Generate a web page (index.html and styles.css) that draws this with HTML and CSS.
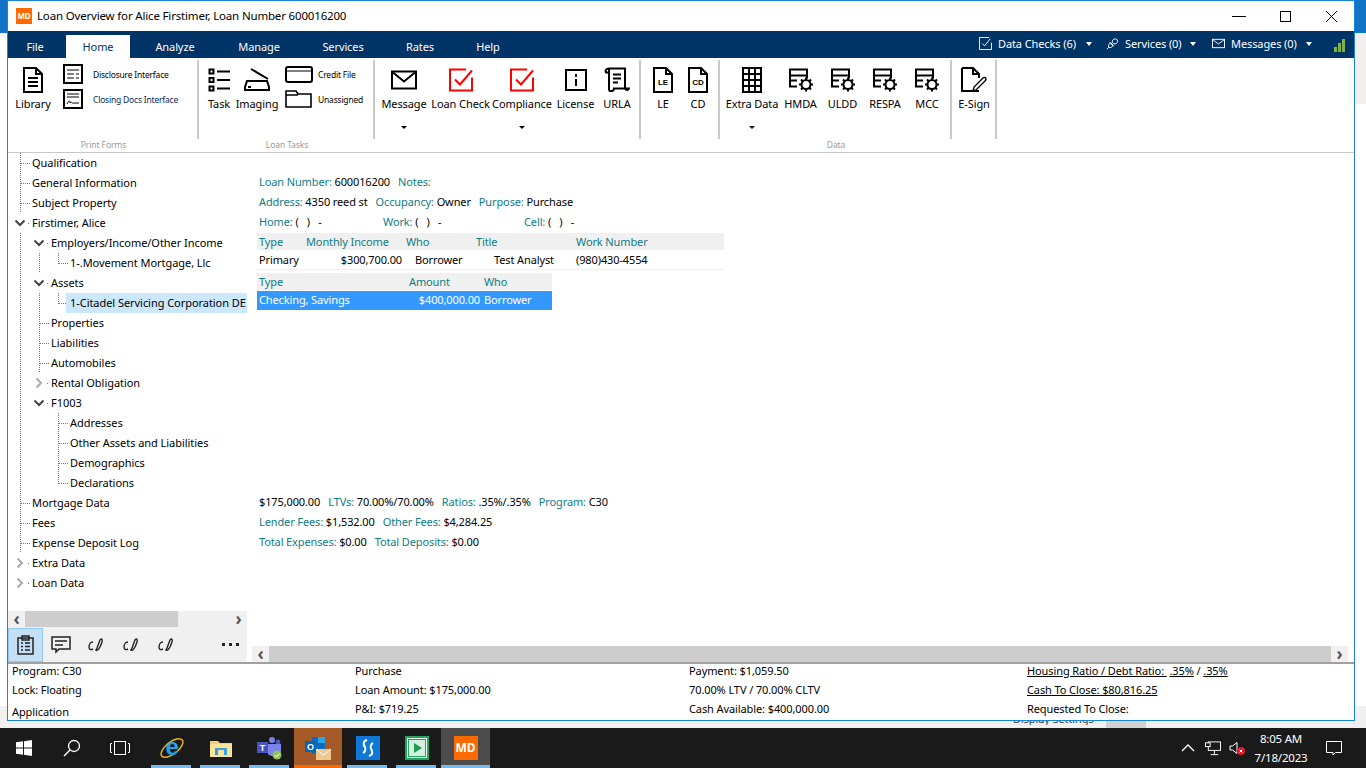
FILE: index.html
```html
<!DOCTYPE html>
<html lang="en">

<head>
    <meta charset="UTF-8">
    <meta name="viewport" content="width=device-width, initial-scale=1.0">
    <link rel="stylesheet" href="styles.css">
    <title>Loan Overview</title>
</head>

<body>
    <svg class="defs" aria-hidden="true">
        <symbol id="gearTable" viewBox="0 0 26 25">
            <path d="M2 13V2H19V11M2 8H19M2 13V19H9M2 13H9" fill="none" stroke="#000" stroke-width="2" />
            <circle cx="18" cy="17" r="4.500" fill="none" stroke="#000" stroke-width="2" />
            <path d="M18 10V12.500M18 21.500V24M11 17H13.500M22.500 17H25M13 12L15 14M21 20L23 22M23 12L21 14M15 20L13 22" stroke="#000" stroke-width="2" />
        </symbol>
        <symbol id="redCheck" viewBox="0 0 26 25">
            <path d="M18 2H2V23H24V10" fill="none" stroke="#f00" stroke-width="2" />
            <path d="M7 12L12 17L24 3" fill="none" stroke="#f00" stroke-width="2" />
        </symbol>
        <symbol id="signPen" viewBox="0 0 16 16">
            <path d="M5 5C2 5 1 8 1 10C1 13 3 13 5 12M8 13C10 14 12 11 14 5C15 2 13 1 12 3L9 11Z" fill="none" stroke="#222" stroke-width="1.400" />
        </symbol>
        <symbol id="chevOpen" viewBox="0 0 12 8">
            <path d="M1.500 1.500L6 6L10.500 1.500" fill="none" stroke="#444" stroke-width="2" />
        </symbol>
        <symbol id="chevClosed" viewBox="0 0 8 12">
            <path d="M1.500 1.500L6 6L1.500 10.500" fill="none" stroke="#aaa" stroke-width="2" />
        </symbol>
    </svg>

    <div class="desktop">
        <div class="deskHead"></div>
        <div class="deskSide"></div>
        <div class="deskStrip"></div>
        <div class="deskPeekBox"></div>
        <div class="deskPeek"><span>Display Settings</span></div>

        <div class="window">
            <!-- Barra de titulo -->
            <div class="titleBar">
                <span class="appLogo">MD</span>
                <span class="titleText">Loan Overview for Alice Firstimer, Loan Number 600016200</span>
                <div class="winBtns">
                    <svg class="winBtn" viewBox="0 0 46 30"><path d="M16 15.500H30" stroke="#000" /></svg>
                    <svg class="winBtn" viewBox="0 0 46 30"><rect x="18.500" y="10.500" width="10" height="10" fill="none" stroke="#000" /></svg>
                    <svg class="winBtn" viewBox="0 0 46 30"><path d="M18 10L29 21M29 10L18 21" stroke="#000" /></svg>
                </div>
            </div>

            <!-- Pestañas -->
            <div class="navBar">
                <span class="tab tabFile">File</span>
                <span class="tab tabHome">Home</span>
                <span class="tab tabAnalyze">Analyze</span>
                <span class="tab tabManage">Manage</span>
                <span class="tab tabServices">Services</span>
                <span class="tab tabRates">Rates</span>
                <span class="tab tabHelp">Help</span>
                <div class="navRight">
                    <div class="navItem navChecks">
                        <svg class="navIcon" viewBox="0 0 14 14"><path d="M11 .500H.500V13.500H13.500V6" fill="none" stroke="#fff" /><path d="M3.500 7L6 9.500L12 2" fill="none" stroke="#fff" /></svg>
                        <span class="navLabel">Data Checks (6)</span><span class="caret"></span>
                    </div>
                    <div class="navItem navServices">
                        <svg class="navIcon" viewBox="0 0 14 14"><path d="M1 13L3 11M4 6L8 10M3 11C2 9 3 8 5 6L8 9C6 11 5 12 3 11ZM7 6C6 4 8 2 10 2C12 2 13 4 12 6C11 8 9 8 7 6Z" fill="none" stroke="#fff" /></svg>
                        <span class="navLabel">Services (0)</span><span class="caret"></span>
                    </div>
                    <div class="navItem navMessages">
                        <svg class="navIcon" viewBox="0 0 14 10"><rect x=".500" y=".500" width="13" height="9" fill="none" stroke="#fff" /><path d="M1 1L7 5.500L13 1" fill="none" stroke="#fff" /></svg>
                        <span class="navLabel">Messages (0)</span><span class="caret"></span>
                    </div>
                    <div class="signal"><i class="barA"></i><i class="barB"></i><i class="barC"></i></div>
                </div>
            </div>

            <!-- Ribbon -->
            <div class="ribbon">
                <div class="group groupPrint">
                    <div class="groupItems">
                        <div class="rbtn w38">
                            <svg class="ico" width="20" height="26" viewBox="0 0 20 26"><path d="M1 1H13L19 7V25H1ZM13 1V7H19M5 11H15M5 15H15M5 19H15" fill="none" stroke="#000" stroke-width="2" /></svg>
                            <span>Library</span>
                        </div>
                        <div class="smallCol smallDocs">
                            <div class="smallRow">
                                <svg width="20" height="20" viewBox="0 0 20 20"><rect x="1" y="1" width="18" height="18" fill="none" stroke="#000" stroke-width="2" /><path d="M4 6H16M4 10H11M13 10H16M4 14H11M13 14H16" stroke="#000" /></svg>
                                <span>Disclosure Interface</span>
                            </div>
                            <div class="smallRow">
                                <svg width="20" height="20" viewBox="0 0 20 20"><rect x="1" y="1" width="18" height="18" fill="none" stroke="#000" stroke-width="2" /><path d="M4 5H16M4 8H16M4 15C6 11 7 11 7 14C9 12 9 15 11 14H16" fill="none" stroke="#000" /></svg>
                                <span class="linkish">Closing Docs Interface</span>
                            </div>
                        </div>
                    </div>
                    <span class="groupName">Print Forms</span>
                </div>

                <div class="group groupTasks">
                    <div class="groupItems">
                        <div class="rbtn w38">
                            <svg class="ico" width="23" height="24" viewBox="0 0 23 24"><path d="M1.500 1.500H5.500V5.500H1.500ZM1.500 10H5.500V14H1.500ZM1.500 18.500H5.500V22.500H1.500ZM9 3.500H22M9 12H22M9 20.500H22" fill="none" stroke="#000" stroke-width="2" /></svg>
                            <span>Task</span>
                        </div>
                        <div class="rbtn w38">
                            <svg class="ico" width="26" height="24" viewBox="0 0 26 24"><path d="M7 1L24 11M3 13H23L25 19V22H1V19ZM4 19H7" fill="none" stroke="#000" stroke-width="2" /></svg>
                            <span>Imaging</span>
                        </div>
                        <div class="smallCol smallFiles">
                            <div class="smallRow">
                                <svg width="28" height="17" viewBox="0 0 28 17"><rect x="1" y="1" width="26" height="15" rx="2" fill="none" stroke="#000" stroke-width="2" /><path d="M1 5H27" stroke="#000" /></svg>
                                <span>Credit File</span>
                            </div>
                            <div class="smallRow">
                                <svg width="28" height="18" viewBox="0 0 28 18"><path d="M1 1H11L13 4H26V17H1ZM1 5H13" fill="none" stroke="#000" stroke-width="1.600" /></svg>
                                <span>Unassigned</span>
                            </div>
                        </div>
                    </div>
                    <span class="groupName">Loan Tasks</span>
                </div>

                <div class="group groupChecks">
                    <div class="groupItems">
                        <div class="rbtn w56">
                            <svg class="ico" width="26" height="19" viewBox="0 0 26 19"><rect x="1" y="1" width="24" height="17" fill="none" stroke="#000" stroke-width="2" /><path d="M2 2L13 11L24 2" fill="none" stroke="#000" stroke-width="2" /></svg>
                            <span>Message</span><b class="dropMark"></b>
                        </div>
                        <div class="rbtn w57">
                            <svg class="ico" width="26" height="25"><use href="#redCheck" /></svg>
                            <span>Loan Check</span>
                        </div>
                        <div class="rbtn w66">
                            <svg class="ico" width="26" height="25"><use href="#redCheck" /></svg>
                            <span>Compliance</span><b class="dropMark"></b>
                        </div>
                        <div class="rbtn w41">
                            <svg class="ico" width="22" height="22" viewBox="0 0 22 22"><rect x="1" y="1" width="20" height="20" fill="none" stroke="#000" stroke-width="2" /><path d="M11 5V8M11 10V17" stroke="#000" stroke-width="2" /></svg>
                            <span>License</span>
                        </div>
                        <div class="rbtn w42">
                            <svg class="ico" width="26" height="25" viewBox="0 0 26 25"><path d="M5 1H21V20C21 23 24 23 25 21H10C10 24 7 24 5 23M5 1C2 1 1 3 2 5H5M5 1V23M9 7H17M9 11H17M9 15H14" fill="none" stroke="#000" stroke-width="2" /></svg>
                            <span>URLA</span>
                        </div>
                    </div>
                </div>

                <div class="group groupForms">
                    <div class="groupItems">
                        <div class="rbtn w34">
                            <svg class="ico" width="20" height="26" viewBox="0 0 20 26"><path d="M1 1H13L19 7V25H1ZM13 1V7H19" fill="none" stroke="#000" stroke-width="2" /><text x="10" y="18" class="docText">LE</text></svg>
                            <span>LE</span>
                        </div>
                        <div class="rbtn w36">
                            <svg class="ico" width="20" height="26" viewBox="0 0 20 26"><path d="M1 1H13L19 7V25H1ZM13 1V7H19" fill="none" stroke="#000" stroke-width="2" /><text x="10" y="18" class="docText">CD</text></svg>
                            <span>CD</span>
                        </div>
                    </div>
                </div>

                <div class="group groupData">
                    <div class="groupItems">
                        <div class="rbtn w56">
                            <svg class="ico" width="20" height="26" viewBox="0 0 20 26"><rect width="20" height="26" fill="#000" /><path d="M2 2H6V6H2ZM8 2H12V6H8ZM14 2H18V6H14ZM2 8H6V12H2ZM8 8H12V12H8ZM14 8H18V12H14ZM2 14H6V18H2ZM8 14H12V18H8ZM14 14H18V18H14ZM2 20H6V24H2ZM8 20H12V24H8ZM14 20H18V24H14Z" fill="#fff" /></svg>
                            <span>Extra Data</span><b class="dropMark"></b>
                        </div>
                        <div class="rbtn w41">
                            <svg class="ico" width="26" height="25"><use href="#gearTable" /></svg>
                            <span>HMDA</span>
                        </div>
                        <div class="rbtn w43">
                            <svg class="ico" width="26" height="25"><use href="#gearTable" /></svg>
                            <span>ULDD</span>
                        </div>
                        <div class="rbtn w42">
                            <svg class="ico" width="26" height="25"><use href="#gearTable" /></svg>
                            <span>RESPA</span>
                        </div>
                        <div class="rbtn w42">
                            <svg class="ico" width="26" height="25"><use href="#gearTable" /></svg>
                            <span>MCC</span>
                        </div>
                    </div>
                    <span class="groupName">Data</span>
                </div>

                <div class="group groupSign">
                    <div class="groupItems">
                        <div class="rbtn w42">
                            <svg class="ico" width="26" height="26" viewBox="0 0 26 26"><path d="M1 1H12L18 7V11M12 1V7H18M18 24H1V1" fill="none" stroke="#000" stroke-width="2" /><path d="M12 24L13 20L22 11C24 9 26 12 24 14L15 23Z" fill="none" stroke="#000" stroke-width="1.400" /></svg>
                            <span>E-Sign</span>
                        </div>
                    </div>
                </div>
            </div>

            <div class="mainArea">
                <!-- Arbol de navegacion -->
                <div class="leftPane">
                    <div class="tree">
                        <div class="node"><i class="cell tee"></i>Qualification</div>
                        <div class="node"><i class="cell tee"></i>General Information</div>
                        <div class="node"><i class="cell tee"></i>Subject Property</div>
                        <div class="node"><i class="cell exp"><svg width="12" height="8"><use href="#chevOpen" /></svg></i>Firstimer, Alice</div>
                        <div class="node"><i class="cell line"></i><i class="cell exp"><svg width="12" height="8"><use href="#chevOpen" /></svg></i>Employers/Income/Other Income</div>
                        <div class="node"><i class="cell line"></i><i class="cell line"></i><i class="cell ell"></i>1-.Movement Mortgage, Llc</div>
                        <div class="node"><i class="cell line"></i><i class="cell exp"><svg width="12" height="8"><use href="#chevOpen" /></svg></i>Assets</div>
                        <div class="node"><i class="cell line"></i><i class="cell line"></i><i class="cell ell"></i><span class="selected">1-Citadel Servicing Corporation DE</span></div>
                        <div class="node"><i class="cell line"></i><i class="cell tee"></i>Properties</div>
                        <div class="node"><i class="cell line"></i><i class="cell tee"></i>Liabilities</div>
                        <div class="node"><i class="cell line"></i><i class="cell tee"></i>Automobiles</div>
                        <div class="node"><i class="cell line"></i><i class="cell exp"><svg width="8" height="12"><use href="#chevClosed" /></svg></i>Rental Obligation</div>
                        <div class="node"><i class="cell line"></i><i class="cell exp"><svg width="12" height="8"><use href="#chevOpen" /></svg></i>F1003</div>
                        <div class="node"><i class="cell line"></i><i class="cell"></i><i class="cell tee"></i>Addresses</div>
                        <div class="node"><i class="cell line"></i><i class="cell"></i><i class="cell tee"></i>Other Assets and Liabilities</div>
                        <div class="node"><i class="cell line"></i><i class="cell"></i><i class="cell tee"></i>Demographics</div>
                        <div class="node"><i class="cell line"></i><i class="cell"></i><i class="cell ell"></i>Declarations</div>
                        <div class="node"><i class="cell tee"></i>Mortgage Data</div>
                        <div class="node"><i class="cell tee"></i>Fees</div>
                        <div class="node"><i class="cell tee"></i>Expense Deposit Log</div>
                        <div class="node"><i class="cell exp"><svg width="8" height="12"><use href="#chevClosed" /></svg></i>Extra Data</div>
                        <div class="node"><i class="cell exp"><svg width="8" height="12"><use href="#chevClosed" /></svg></i>Loan Data</div>
                    </div>
                    <div class="hScroll treeScroll">
                        <span class="scrollArrow">&#8249;</span>
                        <div class="track"><div class="thumb thumbTree"></div></div>
                        <span class="scrollArrow">&#8250;</span>
                    </div>
                    <div class="paneTools">
                        <div class="toolBtn toolActive">
                            <svg width="17" height="20" viewBox="0 0 17 20"><path d="M1 3H16V19H1ZM5 1H12V5H5ZM4 8H6M8 8H13M4 11.500H6M8 11.500H13M4 15H6M8 15H13" fill="none" stroke="#222" stroke-width="1.500" /></svg>
                        </div>
                        <div class="toolBtn">
                            <svg width="20" height="18" viewBox="0 0 20 18"><path d="M1 1H19V13H8L5 16V13H1ZM4 5H16M4 9H12" fill="none" stroke="#222" stroke-width="1.500" /></svg>
                        </div>
                        <div class="toolBtn"><svg width="16" height="16"><use href="#signPen" /></svg></div>
                        <div class="toolBtn"><svg width="16" height="16"><use href="#signPen" /></svg></div>
                        <div class="toolBtn"><svg width="16" height="16"><use href="#signPen" /></svg></div>
                        <div class="toolMore"><i></i><i></i><i></i></div>
                    </div>
                </div>

                <!-- Datos del prestamo -->
                <div class="rightPane">
                    <div class="details">
                        <div class="infoRow"><label>Loan Number:</label> 600016200<label class="next">Notes:</label></div>
                        <div class="infoRow"><label>Address:</label> 4350 reed st<label class="next">Occupancy:</label> Owner<label class="next">Purpose:</label> Purchase</div>
                        <div class="infoRow phones">
                            <div class="phoneHome"><label>Home:</label> (&nbsp;&nbsp;&nbsp;)&nbsp;&nbsp;&nbsp;-</div>
                            <div class="phoneWork"><label>Work:</label> (&nbsp;&nbsp;&nbsp;)&nbsp;&nbsp;&nbsp;-</div>
                            <div><label>Cell:</label> (&nbsp;&nbsp;&nbsp;)&nbsp;&nbsp;&nbsp;-</div>
                        </div>

                        <div class="gridHead headJobs"><span>Type</span><span>Monthly Income</span><span>Who</span><span>Title</span><span>Work Number</span></div>
                        <div class="gridRow rowJobs"><span>Primary</span><span class="amount">$300,700.00</span><span>Borrower</span><span>Test Analyst</span><span>(980)430-4554</span></div>

                        <div class="gridHead headAssets"><span>Type</span><span>Amount</span><span>Who</span></div>
                        <div class="gridRow rowAssets"><span>Checking, Savings</span><span class="amount">$400,000.00</span><span>Borrower</span></div>

                        <div class="summary">
                            <div class="infoRow">$175,000.00<label class="next">LTVs:</label> 70.00%/70.00%<label class="next">Ratios:</label> .35%/.35%<label class="next">Program:</label> C30</div>
                            <div class="infoRow"><label>Lender Fees:</label> $1,532.00<label class="next">Other Fees:</label> $4,284.25</div>
                            <div class="infoRow"><label>Total Expenses:</label> $0.00<label class="next">Total Deposits:</label> $0.00</div>
                        </div>
                    </div>
                    <div class="hScroll mainScroll">
                        <span class="scrollArrow">&#8249;</span>
                        <div class="track"><div class="thumb thumbMain"></div></div>
                        <span class="scrollArrow">&#8250;</span>
                    </div>
                </div>
            </div>

            <!-- Resumen inferior -->
            <div class="statusBar">
                <div class="statusCol colA">
                    <div>Program: C30</div>
                    <div>Lock: Floating</div>
                    <div class="lowered">Application</div>
                </div>
                <div class="statusCol colB">
                    <div>Purchase</div>
                    <div>Loan Amount: $175,000.00</div>
                    <div>P&amp;I: $719.25</div>
                </div>
                <div class="statusCol colC">
                    <div>Payment: $1,059.50</div>
                    <div>70.00% LTV / 70.00% CLTV</div>
                    <div>Cash Available: $400,000.00</div>
                </div>
                <div class="statusCol">
                    <div><u>Housing Ratio / Debt Ratio:&nbsp;</u> <u>.35%</u> / <u>.35%</u></div>
                    <div><u>Cash To Close: $80,816.25</u></div>
                    <div>Requested To Close:</div>
                </div>
            </div>
        </div>
    </div>

    <!-- Barra de tareas -->
    <div class="taskbar">
        <div class="sysBtn">
            <svg width="16" height="16" viewBox="0 0 16 16"><path d="M0 2.300L7 1.300V7.500H0ZM8 1.200L16 0V7.500H8ZM0 8.500H7V14.700L0 13.700ZM8 8.500H16V16L8 14.800Z" fill="#fff" /></svg>
        </div>
        <div class="sysBtn">
            <svg width="18" height="18" viewBox="0 0 18 18"><circle cx="11" cy="7" r="5.500" fill="none" stroke="#fff" stroke-width="1.300" /><path d="M7 11L1 17" stroke="#fff" stroke-width="1.500" /></svg>
        </div>
        <div class="sysBtn">
            <svg width="20" height="14" viewBox="0 0 20 14"><rect x="4.500" y=".500" width="11" height="13" fill="none" stroke="#fff" /><path d="M2 2.500H.500V11.500H2M18 2.500H19.500V11.500H18" fill="none" stroke="#fff" /></svg>
        </div>
        <div class="appBtn running">
            <svg class="ieIcon" width="24" height="24" viewBox="0 0 24 24"><ellipse cx="12" cy="12" rx="13" ry="6" transform="rotate(-38 12 12)" fill="none" stroke="#e8b01f" stroke-width="1.500" /><text x="12" y="19" class="ieText">e</text></svg>
        </div>
        <div class="appBtn running">
            <svg width="22" height="18" viewBox="0 0 22 18"><path d="M0 2H8L10 4H22V18H0Z" fill="#f2cf73" /><path d="M0 5H22V18H0Z" fill="#fbe29a" /><path d="M8 16V11H14V16H17V9H5V16Z" fill="#3aa0dc" /></svg>
        </div>
        <div class="appBtn running">
            <svg width="25" height="24" viewBox="0 0 25 24"><circle cx="15" cy="4" r="3" fill="#7b83eb" /><circle cx="21" cy="6" r="2.400" fill="#5059c9" /><path d="M9 8H24V16C24 21 12 21 11 18Z" fill="#7b83eb" /><rect y="6" width="11" height="11" fill="#4b53bc" /><text x="5.500" y="15" class="teamsText">T</text><circle cx="20" cy="19" r="4.500" fill="#92c353" /><path d="M17.500 19L19.500 21L22.500 17.500" fill="none" stroke="#fff" /></svg>
        </div>
        <div class="appBtn outlook">
            <svg width="26" height="24" viewBox="0 0 26 24"><rect x="7" y="1" width="13" height="17" fill="#0f6cbd" /><rect x="13" y="1" width="7" height="6" fill="#28a8ea" /><rect y="5" width="11" height="11" fill="#0a64b4" /><text x="5.500" y="14" class="teamsText">O</text><rect x="11" y="13" width="15" height="11" fill="#efc78f" /><path d="M11 13L18.500 19L26 13" fill="none" stroke="#fff" /></svg>
        </div>
        <div class="appBtn running">
            <svg width="24" height="24" viewBox="0 0 24 24"><rect width="24" height="24" fill="#0d78d8" /><path d="M11 4C7 5 7 9 9 11C10 13 9 16 7 17M13 20C17 19 17 15 15 13C14 11 15 8 17 7" fill="none" stroke="#fff" stroke-width="2" /></svg>
        </div>
        <div class="appBtn running">
            <svg width="24" height="24" viewBox="0 0 24 24"><rect x="1" y="1" width="22" height="22" fill="#fff" stroke="#1fa85c" stroke-width="2" /><rect x="3.500" y="3.500" width="17" height="17" fill="#d4f0df" stroke="#1fa85c" /><path d="M9 7L17 12L9 17Z" fill="#1d9a55" /></svg>
        </div>
        <div class="appBtn mdBtn"><span class="mdLogo">MD</span></div>

        <div class="tray">
            <svg class="trayChev" width="14" height="8" viewBox="0 0 14 8"><path d="M1 7L7 1L13 7" fill="none" stroke="#fff" stroke-width="1.300" /></svg>
            <svg class="trayNet" width="16" height="15" viewBox="0 0 17 15"><rect x="3.500" y=".500" width="13" height="9" fill="#1a1a1a" stroke="#fff" /><path d="M10 10V14M6 14H14" stroke="#fff" /><rect x=".500" y="1.500" width="5" height="4" fill="#1a1a1a" stroke="#fff" /></svg>
            <svg class="traySound" width="17" height="15" viewBox="0 0 17 15"><path d="M1 5H3.500L8 1.500V12.500L3.500 9H1Z" fill="none" stroke="#fff" /><circle cx="12" cy="10" r="4" fill="#e81123" /><path d="M10.500 8.500L13.500 11.500M13.500 8.500L10.500 11.500" stroke="#fff" /></svg>
            <div class="clock"><span>8:05 AM</span><span>7/18/2023</span></div>
            <svg class="trayNote" width="16" height="15" viewBox="0 0 16 15"><path d="M.500 .500H15.500V11.500H9.500L7 14V11.500H.500Z" fill="none" stroke="#fff" /></svg>
        </div>
    </div>
</body>

</html>
```

FILE: styles.css
```css
* {
    box-sizing: border-box;
}

body {
    margin: 0;
    width: 1366px;
    height: 768px;
    overflow: hidden;
    background-color: #fff;
    font-family: "Noto Sans", "Open Sans", sans-serif;
    font-size: 11px;
    letter-spacing: -0.1px;
    color: #000;
}

.defs {
    position: absolute;
    width: 0;
    height: 0;
}

/* Escritorio detras de la ventana */
.desktop {
    position: relative;
    height: 728px;
    background: #fff;
}

.deskHead {
    height: 33px;
    background: #1173c5;
}

.deskSide {
    position: absolute;
    top: 33px;
    right: 0;
    width: 11px;
    height: 71px;
    background: #f0efee;
}

.deskStrip {
    position: absolute;
    left: 0;
    right: 0;
    bottom: 0;
    height: 22px;
    background: #f0f0f0;
}

.deskPeekBox {
    position: absolute;
    left: 1106px;
    bottom: 0;
    width: 40px;
    height: 8px;
    background: #d2d2d2;
}

.deskPeek {
    position: absolute;
    left: 1013px;
    top: 721px;
    height: 4px;
    overflow: hidden;
    color: #444;
}

.deskPeek span {
    display: block;
    margin-top: -4px;
    line-height: 4px;
}

.window {
    position: absolute;
    left: 7px;
    top: 0;
    width: 1348px;
    height: 721px;
    display: flex;
    flex-direction: column;
    background: #fff;
    border: 1px solid #1883d7;
}

/* Titulo */
.titleBar {
    height: 30px;
    flex: none;
    display: flex;
    align-items: center;
    padding-left: 8px;
}

.appLogo {
    width: 16px;
    height: 16px;
    margin-right: 5px;
    background: #ff6a00;
    color: #fff;
    font-size: 8px;
    font-weight: 700;
    line-height: 16px;
    text-align: center;
}

.titleText {
    font-size: 11.5px;
    letter-spacing: -0.17px;
    line-height: 28px;
}

.winBtns {
    margin-left: auto;
    display: flex;
}

.winBtn {
    width: 46px;
    height: 30px;
}

/* Pestañas */
.navBar {
    height: 27px;
    flex: none;
    display: flex;
    align-items: flex-end;
    background: #003366;
    color: #fff;
}

.tab {
    height: 23px;
    line-height: 24px;
    text-align: center;
}

.tabFile { width: 54px; margin-right: 4px; line-height: 23px; }
.tabHome { width: 64px; background: #fff; color: #003366; }
.tabAnalyze { width: 90px; }
.tabManage { width: 78px; }
.tabServices { width: 90px; }
.tabRates { width: 64px; }
.tabHelp { width: 72px; }

.navRight {
    margin-left: auto;
    align-self: flex-start;
    height: 25px;
    display: flex;
    align-items: center;
}

.navItem {
    display: flex;
    align-items: center;
}

.navChecks { width: 127px; padding-right: 14px; }
.navServices { width: 106px; padding-right: 16px; }
.navMessages { width: 122px; padding-right: 22px; }

.navIcon {
    width: 13px;
    height: 13px;
    margin-right: 6px;
    flex: none;
}

.navLabel {
    flex: 1;
    white-space: nowrap;
}

.caret {
    width: 0;
    height: 0;
    border-left: 3.5px solid transparent;
    border-right: 3.5px solid transparent;
    border-top: 4px solid #fff;
}

.signal {
    width: 20px;
    height: 14px;
    display: flex;
    align-items: flex-end;
    gap: 1px;
    margin-top: 2px;
}

.signal i {
    width: 3px;
    background: #7cb342;
}

.barA { height: 5px; }
.barB { height: 9px; }
.barC { height: 13px; }

/* Ribbon */
.ribbon {
    height: 95px;
    flex: none;
    display: flex;
    border-bottom: 1px solid #c8c8c8;
}

.group {
    display: flex;
    flex-direction: column;
    align-items: stretch;
    padding-top: 2px;
}

.groupItems {
    height: 79px;
    display: flex;
    border-right: 2px solid #c8c8c8;
}

.groupName {
    font-size: 8.5px;
    line-height: 12px;
    text-align: center;
    color: #999;
}

.groupPrint { width: 191px; }
.groupPrint .groupItems { padding-left: 6px; }
.groupTasks { width: 176px; }
.groupTasks .groupItems { padding-left: 1px; }
.groupChecks { width: 266px; }
.groupChecks .groupItems { padding-left: 1px; }
.groupForms { width: 79px; }
.groupForms .groupItems { padding-left: 5px; }
.groupData { width: 232px; }
.groupData .groupItems { padding-left: 4px; }
.groupSign { width: 45px; }
.groupSign .groupItems { padding-left: 1px; }

.rbtn {
    position: relative;
    height: 79px;
    flex: none;
    display: flex;
    flex-direction: column;
    align-items: center;
    white-space: nowrap;
}

.ico {
    height: 26px;
    margin-top: 7px;
    margin-bottom: 3px;
    flex: none;
}

.rbtn span {
    line-height: 16px;
}

.w34 { width: 34px; }
.w36 { width: 36px; }
.w38 { width: 38px; }
.w41 { width: 41px; }
.w42 { width: 42px; }
.w43 { width: 43px; }
.w56 { width: 56px; }
.w57 { width: 57px; }
.w66 { width: 66px; }

.dropMark {
    margin-top: 14px;
    width: 0;
    height: 0;
    border-left: 3px solid transparent;
    border-right: 3px solid transparent;
    border-top: 3px solid #000;
}

.docText {
    font-family: "Liberation Sans", sans-serif;
    font-size: 8px;
    font-weight: 700;
    text-anchor: middle;
}

.smallCol {
    display: flex;
    flex-direction: column;
    gap: 5px;
    padding-top: 4px;
    font-size: 8.5px;
    letter-spacing: -0.2px;
}

.smallDocs { margin-left: 11px; }
.smallFiles { margin-left: 9px; }

.smallRow {
    height: 20px;
    display: flex;
    align-items: center;
    white-space: nowrap;
}

.smallDocs .smallRow span { margin-left: 10px; }
.smallFiles .smallRow span { margin-left: 5px; }

.linkish {
    color: #0a2a55;
}

/* Zona principal */
.mainArea {
    flex: 1;
    min-height: 0;
    display: flex;
    border-bottom: 2px solid #a0a0a0;
}

.leftPane {
    width: 239px;
    flex: none;
    display: flex;
    flex-direction: column;
}

.tree {
    flex: 1;
    min-height: 0;
    overflow: hidden;
    padding-left: 3px;
    letter-spacing: -0.05px;
}

.node {
    height: 20px;
    display: flex;
    align-items: flex-start;
    line-height: 19px;
    white-space: nowrap;
}

.cell {
    width: 19px;
    height: 20px;
    flex: none;
    display: flex;
    align-items: center;
    justify-content: center;
    padding-right: 1px;
    background-repeat: no-repeat;
}

.cell.line {
    background-image: repeating-linear-gradient(to bottom, #777 0 1px, transparent 1px 2px);
    background-size: 1px 20px;
    background-position: 9px 0;
}

.cell.tee,
.cell.ell {
    margin-right: 2px;
    background-image:
        repeating-linear-gradient(to bottom, #777 0 1px, transparent 1px 2px),
        repeating-linear-gradient(to right, #777 0 1px, transparent 1px 2px);
    background-position: 9px 0, 10px 10px;
}

.cell.tee { background-size: 1px 20px, 9px 1px; }
.cell.ell { background-size: 1px 11px, 9px 1px; }

.cell.exp {
    margin-right: 2px;
    background-image: linear-gradient(#777, #777);
    background-size: 1px 1px;
    background-position: 17px 10px;
}

.selected {
    flex: 1;
    height: 20px;
    margin-left: -4px;
    padding-left: 4px;
    overflow: hidden;
    background: #cce8ff;
}

.hScroll {
    height: 16px;
    flex: none;
    display: flex;
    align-items: center;
    background: #f0f0f0;
}

.scrollArrow {
    width: 17px;
    flex: none;
    font-size: 17px;
    font-weight: 700;
    line-height: 14px;
    text-align: center;
    color: #555;
}

.track {
    flex: 1;
    height: 16px;
}

.thumb {
    height: 16px;
    background: #cdcdcd;
}

.thumbTree { width: 153px; }
.thumbMain { width: 100%; }

.paneTools {
    height: 35px;
    flex: none;
    display: flex;
    align-items: center;
    background: #f0f0f0;
}

.toolBtn {
    width: 35px;
    height: 34px;
    display: flex;
    align-items: center;
    justify-content: center;
}

.toolActive {
    background: #c4dff6;
    border: 1px solid #90c8f6;
}

.toolMore {
    margin-left: 39px;
    display: flex;
    gap: 4px;
}

.toolMore i {
    width: 3px;
    height: 3px;
    background: #222;
}

.rightPane {
    flex: 1;
    min-width: 0;
    display: flex;
    flex-direction: column;
}

.details {
    flex: 1;
    padding: 19px 0 0 10px;
    letter-spacing: -0.12px;
}

.infoRow {
    height: 20px;
    line-height: 20px;
    padding-left: 2px;
    white-space: nowrap;
}

label {
    color: #0e7c86;
}

.next {
    margin-left: 8px;
}

.phones {
    display: flex;
}

.phoneHome { width: 124px; }
.phoneWork { width: 141px; }

.gridHead,
.gridRow {
    display: grid;
    padding-left: 2px;
    white-space: nowrap;
}

.gridHead {
    margin-top: 1px;
    height: 17px;
    line-height: 17px;
    background: #f0f0f0;
    color: #0e7c86;
}

.headJobs { width: 467px; grid-template-columns: 47px 100px 70px 100px 1fr; }
.rowJobs {
    width: 467px;
    height: 20px;
    line-height: 20px;
    border-bottom: 1px solid #eee;
    grid-template-columns: 47px 96px 92px 82px 1fr;
}
.rowJobs span:nth-child(3) { padding-left: 13px; }

.headAssets { margin-top: 3px; width: 295px; grid-template-columns: 150px 75px 1fr; }
.rowAssets {
    margin-top: 1px;
    width: 295px;
    height: 19px;
    line-height: 18px;
    background: #3399ff;
    color: #fff;
    grid-template-columns: 150px 71px 1fr;
}
.rowAssets span:nth-child(3) { padding-left: 4px; }

.amount {
    text-align: right;
}

.summary {
    margin-top: 182px;
}

.mainScroll {
    margin-left: 5px;
    margin-right: 6px;
}

/* Resumen inferior */
.statusBar {
    height: 56px;
    flex: none;
    display: flex;
    padding-left: 4px;
    white-space: nowrap;
}

.statusCol {
    display: flex;
    flex-direction: column;
    gap: 5px;
}

.statusCol div {
    height: 14px;
    line-height: 14px;
}

.colA { width: 343px; }
.colB { width: 334px; }
.colC { width: 338px; }

.lowered {
    margin-top: 3px;
}

/* Barra de tareas */
.taskbar {
    height: 40px;
    display: flex;
    background: #1a1a1a;
    color: #fff;
}

.sysBtn {
    width: 48px;
    height: 40px;
    display: flex;
    align-items: center;
    justify-content: center;
}

.appBtn {
    position: relative;
    width: 49px;
    height: 40px;
    display: flex;
    align-items: center;
    justify-content: center;
}

.sysBtn + .appBtn {
    margin-left: 3px;
}

.running::after {
    content: "";
    position: absolute;
    left: 4px;
    right: 5px;
    bottom: 0;
    height: 3px;
    background: #76b9ed;
}

.outlook {
    background: #a65a28;
    border-right: 1px solid #1a1a1a;
}

.outlook::after {
    content: "";
    position: absolute;
    left: 0;
    right: 0;
    bottom: 0;
    height: 3px;
    background: #f76b00;
}

.mdBtn {
    background: #4c4c4c;
}

.mdBtn::after {
    content: "";
    position: absolute;
    left: 0;
    right: 0;
    bottom: 0;
    height: 3px;
    background: #76b9ed;
}

.mdLogo {
    width: 24px;
    height: 24px;
    line-height: 24px;
    text-align: center;
    background: #ff6a00;
    font-size: 12px;
    font-weight: 700;
}

.ieIcon {
    overflow: visible;
}

.ieText {
    font-family: "Liberation Sans", sans-serif;
    font-size: 24px;
    font-weight: 700;
    fill: #20a4e8;
    text-anchor: middle;
}

.teamsText {
    font-family: "Liberation Sans", sans-serif;
    font-size: 9px;
    font-weight: 700;
    fill: #fff;
    text-anchor: middle;
}

.tray {
    margin-left: auto;
    width: 187px;
    display: flex;
    align-items: center;
}

.trayChev { margin-right: 10px; margin-left: 2px; }
.trayNet { margin-right: 8px; }

.clock {
    width: 70px;
    display: flex;
    flex-direction: column;
    align-items: center;
    font-size: 11.5px;
    letter-spacing: -0.2px;
    line-height: 19px;
}

.trayNote { margin-left: 10px; }
```
